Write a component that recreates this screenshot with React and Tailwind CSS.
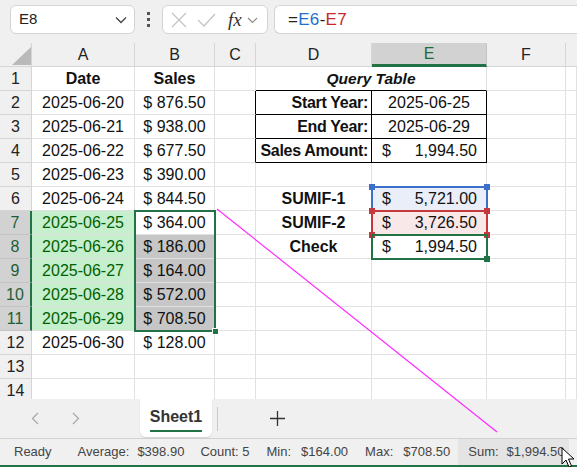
import React from "react";

const GRIDCOLS = "grid grid-cols-[32px_103px_80px_41px_116px_115px_79px_11px]";

function Cell({ children, c = "", r = "border-r-[#e1e1e1]", b = "border-b-[#e1e1e1]" }) {
  return (
    <div className={`h-[24px] border-r border-b ${r} ${b} flex items-center overflow-hidden whitespace-nowrap text-[16px] text-[#111] ${c}`}>
      {children}
    </div>
  );
}

function RowHead({ n, sel }) {
  return sel ? (
    <div className="h-[24px] border-b border-b-[#c4c4c4] border-r-2 border-r-[#217346] bg-[#d2d2d2] flex items-center justify-center text-[16px] text-[#1e5e36]">{n}</div>
  ) : (
    <div className="h-[24px] border-b border-r border-[#d5d5d5] bg-[#f0f0f0] flex items-center justify-center text-[16px] text-[#222]">{n}</div>
  );
}

function Acct({ v, bg = "" }) {
  return (
    <Cell c={`justify-between pl-[10px] pr-[9px] ${bg}`} r="border-r-black" b="border-b-black">
      <span>$</span>
      <span>{v}</span>
    </Cell>
  );
}

const dates = ["2025-06-20","2025-06-21","2025-06-22","2025-06-23","2025-06-24","2025-06-25","2025-06-26","2025-06-27","2025-06-28","2025-06-29","2025-06-30"];
const sales = ["876.50","938.00","677.50","390.00","844.50","364.00","186.00","164.00","572.00","708.50","128.00"];

function DataRow({ n }) {
  const i = n - 2;
  const green = n >= 7 && n <= 11;
  const grayB = n >= 8 && n <= 11;
  const cells = [];
  cells.push(<RowHead key="h" n={n} sel={green} />);
  cells.push(
    <Cell key="a" c={`justify-center ${green ? "bg-[#c6efce] !text-[#006100]" : ""}`}>{dates[i] ?? ""}</Cell>
  );
  cells.push(
    <Cell key="b" c={`justify-center ${grayB ? "bg-[#c6c6c6]" : ""}`}>{sales[i] ? `$ ${sales[i]}` : ""}</Cell>
  );
  const qt = n >= 2 && n <= 4;
  cells.push(<Cell key="c" r={qt ? "border-r-black" : "border-r-[#e1e1e1]"} />);
  const dLabels = { 2: "Start Year:", 3: "End Year:", 4: "Sales Amount:" };
  const dMid = { 6: "SUMIF-1", 7: "SUMIF-2", 8: "Check" };
  if (qt) {
    cells.push(<Cell key="d" c="justify-end pr-[3px] font-bold text-[15px] tracking-[-0.3px]" r="border-r-black" b="border-b-black">{dLabels[n]}</Cell>);
  } else {
    cells.push(<Cell key="d" c="justify-center font-bold text-[15.5px]">{dMid[n] ?? ""}</Cell>);
  }
  if (n === 2) cells.push(<Cell key="e" c="justify-center" r="border-r-black" b="border-b-black">2025-06-25</Cell>);
  else if (n === 3) cells.push(<Cell key="e" c="justify-center" r="border-r-black" b="border-b-black">2025-06-29</Cell>);
  else if (n === 4) cells.push(<Acct key="e" v="1,994.50" />);
  else if (n === 6) cells.push(<Cell key="e" c="justify-between pl-[10px] pr-[9px] bg-[#e9eef8]"><span>$</span><span>5,721.00</span></Cell>);
  else if (n === 7) cells.push(<Cell key="e" c="justify-between pl-[10px] pr-[9px] bg-[#f9e8e8]"><span>$</span><span>3,726.50</span></Cell>);
  else if (n === 8) cells.push(<Cell key="e" c="justify-between pl-[10px] pr-[9px]"><span>$</span><span>1,994.50</span></Cell>);
  else cells.push(<Cell key="e" />);
  cells.push(<Cell key="f" />);
  cells.push(<Cell key="g" />);
  return <>{cells}</>;
}

function Corner({ x, y, color }) {
  return <div className={`absolute w-[6px] h-[6px] ${color}`} style={{ left: x, top: y }} />;
}

export default function App() {
  return (
    <div className="relative w-[577px] h-[467px] overflow-hidden bg-[#f0f0f0] font-['Liberation_Sans',Arial,sans-serif] select-none">
      {/* Formula bar */}
      <div className="h-[43px] flex items-start pt-[5px]">
        <div className="ml-[10px] w-[125px] h-[29px] bg-white border border-[#d4d4d4] rounded-[6px] flex items-center justify-between pl-[8px] pr-[7px]">
          <span className="text-[15px] text-[#222]">E8</span>
          <svg width="12" height="8" viewBox="0 0 12 8"><path d="M1 1.5 L6 6.5 L11 1.5" fill="none" stroke="#444" strokeWidth="1.3" /></svg>
        </div>
        <div className="w-[27px] h-[29px] flex flex-col items-center justify-center gap-[3px]">
          <div className="w-[3px] h-[3px] bg-[#555]" />
          <div className="w-[3px] h-[3px] bg-[#555]" />
          <div className="w-[3px] h-[3px] bg-[#555]" />
        </div>
        <div className="w-[106px] h-[29px] bg-white border border-[#d4d4d4] rounded-[6px] flex items-center pl-[7px]">
          <svg width="18" height="18" viewBox="0 0 18 18"><path d="M2 2 L16 16 M16 2 L2 16" stroke="#c4c4c4" strokeWidth="1.3" /></svg>
          <svg className="ml-[9px]" width="19" height="16" viewBox="0 0 19 16"><path d="M1 8 L7 14 L18 2" fill="none" stroke="#c4c4c4" strokeWidth="1.3" /></svg>
          <span className="ml-[12px] text-[19px] italic text-[#333] font-['Liberation_Serif',serif] leading-none">fx</span>
          <svg className="ml-[5px]" width="11" height="8" viewBox="0 0 11 8"><path d="M1 2 L5.5 6.5 L10 2" fill="none" stroke="#888" strokeWidth="1.1" /></svg>
        </div>
        <div className="ml-[6px] flex-1 h-[29px] bg-white border border-[#d4d4d4] rounded-l-[6px] border-r-0 flex items-center pl-[13px] text-[17px] tracking-[0.3px]">
          <span className="text-[#222]">=</span>
          <span className="text-[#1f6fce]">E6</span>
          <span className="text-[#222]">-</span>
          <span className="text-[#c6282e]">E7</span>
        </div>
      </div>

      {/* Grid */}
      <div className="relative h-[356px] overflow-hidden bg-white">
        <div className={GRIDCOLS}>
          <div className="h-[24px] border-r border-b border-[#d5d5d5] bg-[#f0f0f0] relative">
            <svg className="absolute left-[12px] top-[4px]" width="19" height="18" viewBox="0 0 19 18"><polygon points="19,0 19,18 0,18" fill="#b9b9b9" /></svg>
          </div>
          {["A", "B", "C", "D"].map((l) => (
            <div key={l} className="h-[24px] border-r border-b border-[#d5d5d5] bg-[#f0f0f0] flex items-center justify-center text-[16px] text-[#222]">{l}</div>
          ))}
          <div className="h-[24px] border-r border-r-[#c4c4c4] border-b-[3px] border-b-[#217346] bg-[#d2d2d2] flex items-center justify-center text-[16px] text-[#1e6b3c]">E</div>
          <div className="h-[24px] border-r border-b border-[#d5d5d5] bg-[#f0f0f0] flex items-center justify-center text-[16px] text-[#222]">F</div>
          <div className="h-[24px] border-b border-[#d5d5d5] bg-[#f0f0f0]" />

          <RowHead n={1} />
          <Cell c="justify-center font-bold text-[15.5px]">Date</Cell>
          <Cell c="justify-center font-bold text-[15.5px]">Sales</Cell>
          <Cell />
          <div className="col-span-2 h-[24px] border-r border-r-[#e1e1e1] border-b border-b-black flex items-center justify-center font-bold italic text-[15.5px] text-[#111]">Query Table</div>
          <Cell />
          <Cell />

          {Array.from({ length: 13 }, (_, k) => (
            <DataRow key={k} n={k + 2} />
          ))}
        </div>

        <div className="absolute left-[134px] top-[167px] w-[82px] h-[122px] border-2 border-[#217346]" />
        <div className="absolute left-[212px] top-[285px] w-[7px] h-[7px] bg-[#217346] border border-white" />
        <div className="absolute left-[371px] top-[143px] w-[117px] h-[26px] border-2 border-[#3b6fc9]" />
        <Corner x={369} y={141} color="bg-[#3b6fc9]" />
        <Corner x={484} y={141} color="bg-[#3b6fc9]" />
        <div className="absolute left-[371px] top-[167px] w-[117px] h-[26px] border-2 border-[#c4373b]" />
        <Corner x={369} y={165} color="bg-[#c4373b]" />
        <Corner x={484} y={165} color="bg-[#c4373b]" />
        <Corner x={369} y={189} color="bg-[#c4373b]" />
        <Corner x={484} y={189} color="bg-[#c4373b]" />
        <div className="absolute left-[371px] top-[191px] w-[117px] h-[26px] border-2 border-[#217346]" />
        <div className="absolute left-[484px] top-[213px] w-[6px] h-[6px] bg-[#217346]" />
      </div>

      {/* Sheet tabs */}
      <div className="h-[40px] border-b border-[#d2d2d2] flex items-start">
        <div className="w-[140px] h-[39px] flex items-center">
          <svg className="ml-[31px]" width="8" height="13" viewBox="0 0 8 13"><path d="M7 1 L1.5 6.5 L7 12" fill="none" stroke="#a6a6a6" strokeWidth="1.2" /></svg>
          <svg className="ml-[33px]" width="8" height="13" viewBox="0 0 8 13"><path d="M1 1 L6.5 6.5 L1 12" fill="none" stroke="#a6a6a6" strokeWidth="1.2" /></svg>
        </div>
        <div className="w-[72px] h-[38px] bg-white rounded-b-[6px] shadow-[0_1px_1px_rgba(0,0,0,0.12)] flex flex-col items-center justify-center">
          <span className="text-[16px] font-bold text-[#333] leading-none mt-[4px]">Sheet1</span>
          <div className="mt-[5px] w-[52px] h-[2px] bg-[#217346]" />
        </div>
        <div className="ml-[5px] mt-[8px] w-px h-[24px] bg-[#c8c8c8]" />
        <svg className="ml-[52px] mt-[12px]" width="15" height="15" viewBox="0 0 15 15"><path d="M7.5 0 V15 M0 7.5 H15" stroke="#333" strokeWidth="1.3" /></svg>
      </div>

      {/* Status bar */}
      <div className="h-[26px] flex items-center text-[13px] text-[#444] whitespace-nowrap">
        <span className="ml-[14px]">Ready</span>
        <span className="ml-[26px]">Average:</span>
        <span className="ml-[8px]">$398.90</span>
        <span className="ml-[16px]">Count: 5</span>
        <span className="ml-[17px]">Min:</span>
        <span className="ml-[10px]">$164.00</span>
        <span className="ml-[17px]">Max:</span>
        <span className="ml-[10px]">$708.50</span>
        <div className="ml-[8px] h-[26px] w-[111px] bg-[#e4e4e4] flex items-center">
          <span className="ml-[10px]">Sum:</span>
          <span className="ml-[8px]">$1,994.50</span>
        </div>
      </div>
      <div className="h-[2px] bg-[#217346]" />

      <svg className="absolute left-0 top-0 pointer-events-none" width="577" height="467">
        <line x1="217" y1="209" x2="497" y2="432" stroke="#ff2bff" strokeWidth="1.2" />
      </svg>
      <svg className="absolute left-[561px] top-[447px]" width="14" height="21" viewBox="0 0 14 21">
        <path d="M1 1 L1 17 L5 13 L8 20 L10.5 19 L7.5 12 L13 12 Z" fill="white" stroke="black" strokeWidth="1" strokeLinejoin="round" />
      </svg>
    </div>
  );
}
